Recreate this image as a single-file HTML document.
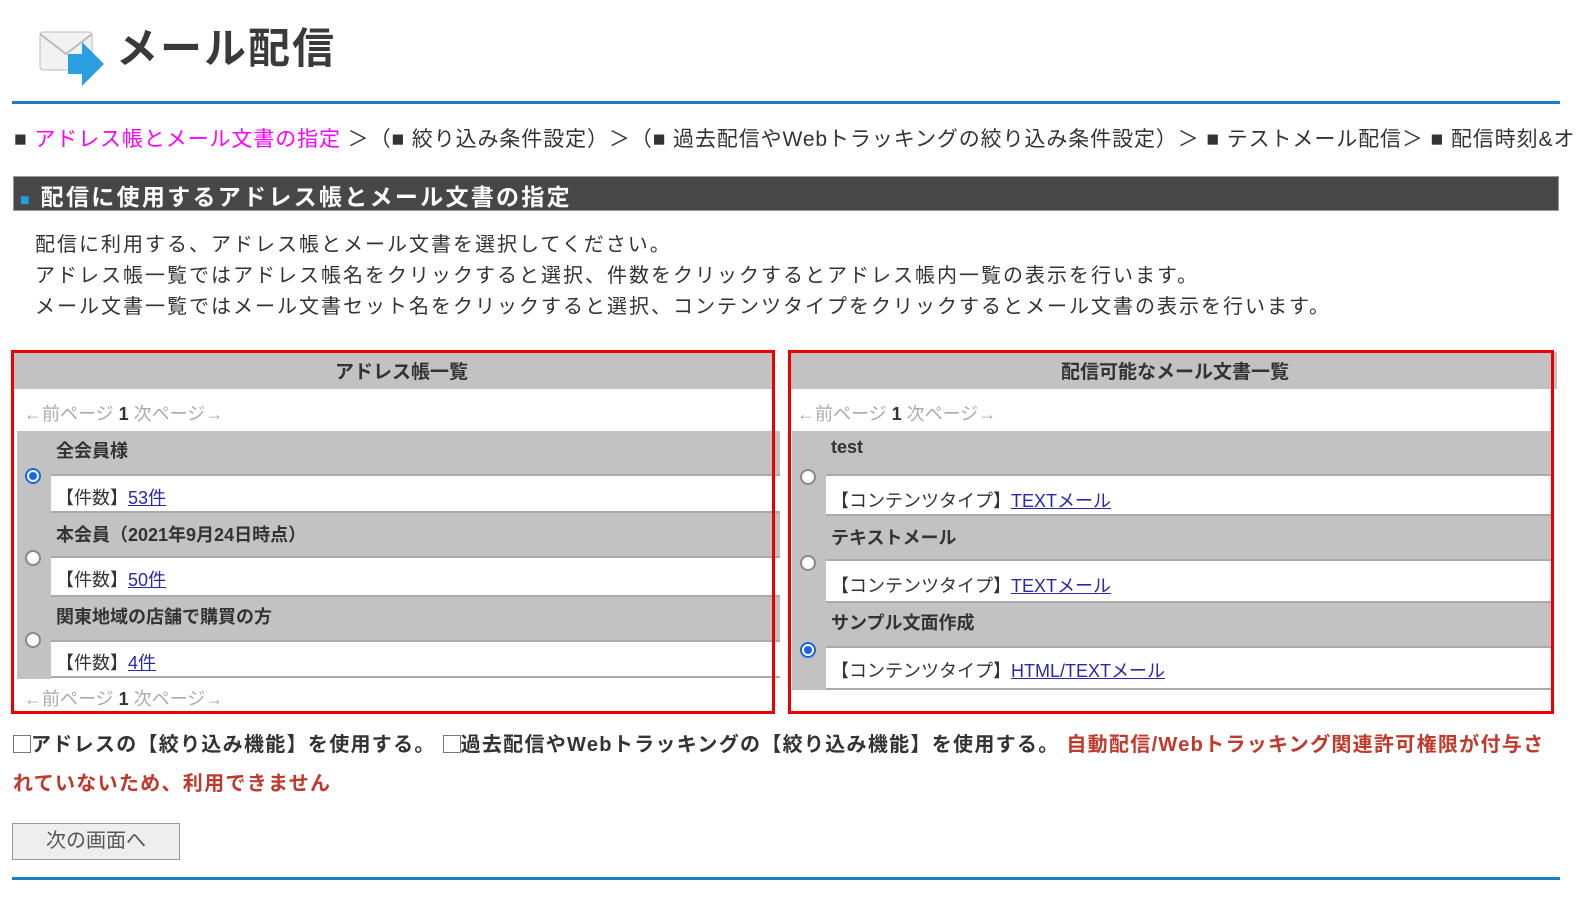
<!DOCTYPE html><html><head><meta charset="utf-8"><style>
body{margin:0;width:1576px;height:897px;background:#fff;font-family:"Liberation Sans","Noto Sans CJK JP",sans-serif;color:#333;position:relative;overflow:hidden}
.a{position:absolute;white-space:nowrap}
.g{position:absolute;background:#c2c2c2}
.w{position:absolute;background:#fff;border-bottom:2px solid #aaa}
.rad{position:absolute;width:16px;height:16px;border-radius:50%;border:2px solid #888;background:#fff;box-sizing:border-box}
.rad.on{border:2px solid #1a66e0;background:radial-gradient(circle,#1a66e0 0 3.5px,#fff 4.5px)}
a{color:#2a2aa8;text-decoration:underline}
.pg{color:#aaa;font-size:18px}
</style></head><body>
<svg class="a" style="left:38px;top:26px" width="68" height="62" viewBox="0 0 68 62"><rect x="2" y="6" width="52" height="38" rx="3" fill="#f2f2f2" stroke="#bbb"/><path d="M2 8 L28 28 L54 8" fill="none" stroke="#bbb" stroke-width="2"/><path d="M30 28 h14 v-12 l22 22 l-22 22 v-12 h-14z" fill="#2a9ee0"/></svg>
<div class="a" style="left:116px;top:15px;font-size:42px;font-weight:bold;color:#3a3a3a;letter-spacing:2px">メール配信</div>
<div class="a" style="left:12px;top:101px;width:1548px;height:3px;background:#1a7fc8"></div>
<div class="a" style="left:14px;top:123px;width:1562px;overflow:hidden;font-size:21px;color:#333;letter-spacing:0.9px">■ <span style="color:#f0f">アドレス帳とメール文書の指定</span> ＞（■ 絞り込み条件設定）＞（■ 過去配信やWebトラッキングの絞り込み条件設定）＞ ■ テストメール配信＞ ■ 配信時刻&amp;オプション</div>
<div class="a" style="left:13px;top:176px;width:1546px;height:35px;background:#474747;border:1px solid #999;box-sizing:border-box"></div>
<div class="a" style="left:20px;top:178px;font-size:23px;font-weight:bold;color:#fff;letter-spacing:2.3px"><span style="color:#1aa0e0;font-size:16px">■</span> 配信に使用するアドレス帳とメール文書の指定</div>
<div class="a" style="left:35px;top:230px;font-size:20px;line-height:31px;color:#333;letter-spacing:2px">配信に利用する、アドレス帳とメール文書を選択してください。<br>アドレス帳一覧ではアドレス帳名をクリックすると選択、件数をクリックするとアドレス帳内一覧の表示を行います。<br>メール文書一覧ではメール文書セット名をクリックすると選択、コンテンツタイプをクリックするとメール文書の表示を行います。</div>

<div class="g" style="left:13px;top:352px;width:760px;height:37px"></div>
<div class="a" style="left:335px;top:357px;font-size:19px;font-weight:bold">アドレス帳一覧</div>
<div class="a pg" style="left:24px;top:400px">←前ページ <b style="color:#333">1</b> 次ページ→</div>
<div class="g" style="left:17px;top:431px;width:34px;height:248px"></div>
<div class="g" style="left:51px;top:431px;width:729px;height:45px;border-bottom:2px solid #aaa;box-sizing:border-box"></div>
<div class="w" style="left:51px;top:476px;width:729px;height:35px"></div>
<div class="g" style="left:51px;top:513px;width:729px;height:45px;border-bottom:2px solid #aaa;box-sizing:border-box"></div>
<div class="w" style="left:51px;top:558px;width:729px;height:37px"></div>
<div class="g" style="left:51px;top:597px;width:729px;height:45px;border-bottom:2px solid #aaa;box-sizing:border-box"></div>
<div class="w" style="left:51px;top:642px;width:729px;height:34px"></div>
<div class="a" style="left:56px;top:437px;font-size:18px;font-weight:bold">全会員様</div>
<div class="a" style="left:56px;top:521px;font-size:18px;font-weight:bold">本会員（2021年9月24日時点）</div>
<div class="a" style="left:56px;top:603px;font-size:18px;font-weight:bold">関東地域の店舗で購買の方</div>
<div class="a" style="left:56px;top:484px;font-size:18px">【件数】<a>53件</a></div>
<div class="a" style="left:56px;top:566px;font-size:18px">【件数】<a>50件</a></div>
<div class="a" style="left:56px;top:649px;font-size:18px">【件数】<a>4件</a></div>
<div class="rad on" style="left:25px;top:468px"></div>
<div class="rad" style="left:25px;top:550px"></div>
<div class="rad" style="left:25px;top:632px"></div>
<div class="a pg" style="left:24px;top:685px">←前ページ <b style="color:#333">1</b> 次ページ→</div>
<div class="a" style="left:11px;top:350px;width:764px;height:364px;border:3px solid #e00;box-sizing:border-box"></div>

<div class="g" style="left:790px;top:352px;width:767px;height:37px"></div>
<div class="a" style="left:1061px;top:357px;font-size:19px;font-weight:bold">配信可能なメール文書一覧</div>
<div class="a pg" style="left:797px;top:400px">←前ページ <b style="color:#333">1</b> 次ページ→</div>
<div class="g" style="left:792px;top:431px;width:34px;height:259px"></div>
<div class="g" style="left:826px;top:431px;width:725px;height:45px;border-bottom:2px solid #aaa;box-sizing:border-box"></div>
<div class="w" style="left:826px;top:476px;width:725px;height:38px"></div>
<div class="g" style="left:826px;top:516px;width:725px;height:45px;border-bottom:2px solid #aaa;box-sizing:border-box"></div>
<div class="w" style="left:826px;top:561px;width:725px;height:40px"></div>
<div class="g" style="left:826px;top:603px;width:725px;height:45px;border-bottom:2px solid #aaa;box-sizing:border-box"></div>
<div class="w" style="left:826px;top:648px;width:725px;height:40px"></div>
<div class="a" style="left:831px;top:437px;font-size:18px;font-weight:bold">test</div>
<div class="a" style="left:831px;top:524px;font-size:18px;font-weight:bold">テキストメール</div>
<div class="a" style="left:831px;top:609px;font-size:18px;font-weight:bold">サンプル文面作成</div>
<div class="a" style="left:831px;top:487px;font-size:18px">【コンテンツタイプ】<a>TEXTメール</a></div>
<div class="a" style="left:831px;top:572px;font-size:18px">【コンテンツタイプ】<a>TEXTメール</a></div>
<div class="a" style="left:831px;top:657px;font-size:18px">【コンテンツタイプ】<a>HTML/TEXTメール</a></div>
<div class="rad" style="left:800px;top:469px"></div>
<div class="rad" style="left:800px;top:555px"></div>
<div class="rad on" style="left:800px;top:642px"></div>
<div class="a" style="left:788px;top:350px;width:766px;height:364px;border:3px solid #e00;box-sizing:border-box"></div>

<div class="a" style="left:13px;top:726px;font-size:20px;font-weight:bold;line-height:39px;white-space:normal;width:1540px;color:#333;letter-spacing:1.3px"><span style="display:inline-block;width:16px;height:16px;border:1px solid #777;vertical-align:-2px"></span>アドレスの【絞り込み機能】を使用する。 <span style="display:inline-block;width:16px;height:16px;border:1px solid #777;vertical-align:-2px"></span>過去配信やWebトラッキングの【絞り込み機能】を使用する。 <span style="color:#c0392b">自動配信/Webトラッキング関連許可権限が付与されていないため、利用できません</span></div>
<div class="a" style="left:12px;top:823px;width:168px;height:37px;background:#eee;border:1px solid #999;box-sizing:border-box;font-size:20px;text-align:center;line-height:35px;color:#555">次の画面へ</div>
<div class="a" style="left:12px;top:877px;width:1548px;height:3px;background:#1a7fc8"></div>
</body></html>
